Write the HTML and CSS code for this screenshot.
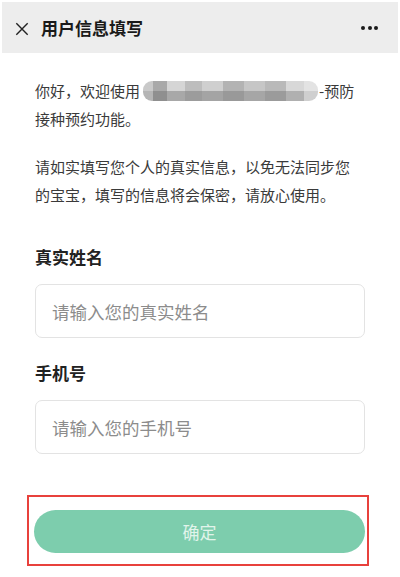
FILE: index.html
```html
<!DOCTYPE html>
<html lang="zh-CN">
<head>
<meta charset="utf-8">
<title>用户信息填写</title>
<link rel="stylesheet" href="styles.css">
</head>
<body>
<header class="nav">
  <svg class="nav-close" width="16" height="16" viewBox="0 0 16 16"><path d="M1.5 1.5 L14.5 14.5 M14.5 1.5 L1.5 14.5" stroke="#222" stroke-width="1.6" fill="none"/></svg>
  <h1 class="nav-title">用户信息填写</h1>
  <div class="nav-more"><span></span><span></span><span></span></div>
</header>
<main class="page">
  <p class="intro"><span>你好，欢迎使用</span><span class="blur" aria-hidden="true"></span><span>-预防</span><span>接种预约功能。</span></p>
  <p class="intro">请如实填写您个人的真实信息，以免无法同步您的宝宝，填写的信息将会保密，请放心使用。</p>
  <form class="form">
    <label class="field-label" for="name">真实姓名</label>
    <input class="field-input" id="name" type="text" placeholder="请输入您的真实姓名">
    <label class="field-label" for="phone">手机号</label>
    <input class="field-input" id="phone" type="tel" placeholder="请输入您的手机号">
    <div class="highlight">
      <button class="submit" type="button">确定</button>
    </div>
  </form>
</main>
</body>
</html>
```
FILE: styles.css
```css
* { box-sizing: border-box; }
html, body { margin: 0; padding: 0; background: #fff; }
body {
  font-family: "Noto Sans CJK SC", "Noto Sans", sans-serif;
  color: #333;
  width: 400px;
  height: 577px;
  overflow: hidden;
}
.nav {
  height: 51px;
  background: #ededed;
  display: flex;
  align-items: center;
  padding: 0 20px 0 13px;
  margin: 2px 2px 0 2px;
}
.nav-close { flex: none; margin-top: 2px; width: 14px; height: 14px; }
.nav-title {
  margin: 0 0 0 12px;
  font-size: 17px;
  font-weight: 700;
  color: #1a1a1a;
  flex: 1;
  line-height: 24px;
}
.nav-more { display: flex; gap: 2.5px; }
.nav-more span { width: 4px; height: 4px; border-radius: 50%; background: #1a1a1a; display: block; }
.page { padding: 0 35px; }
.intro {
  margin: 0;
  font-size: 15px;
  line-height: 28px;
  color: #3a3a3a;
  width: 322px;
}
.intro:first-child { margin-top: 24px; }
.intro + .intro { margin-top: 20px; }
.blur {
  display: inline-block;
  vertical-align: -4px;
  width: 175px;
  height: 20px;
  border-radius: 9px;
  margin: 0 1px 0 3px;
  background:
    linear-gradient(90deg, #c9c9c9 0 6%, #a9a9a9 6% 14%, #d5d5d5 14% 24%, #bdbdbd 24% 34%, #cfcfcf 34% 46%, #b3b3b3 46% 58%, #c6c6c6 58% 70%, #b9b9b9 70% 82%, #d8d8d8 82% 92%, #e3e3e3 92% 100%) top / 100% 50% no-repeat,
    linear-gradient(90deg, #b5b5b5 0 6%, #8f8f8f 6% 14%, #a8a8a8 14% 24%, #9c9c9c 24% 34%, #a4a4a4 34% 46%, #999 46% 58%, #a6a6a6 58% 70%, #9b9b9b 70% 82%, #b0b0b0 82% 92%, #cfcfcf 92% 100%) bottom / 100% 50% no-repeat;
}
.form { display: flex; flex-direction: column; margin-top: 36px; }
.field-label {
  font-size: 17px;
  font-weight: 700;
  line-height: 24px;
  color: #222;
}
.field-input {
  margin-top: 15px;
  height: 54px;
  width: 330px;
  border: 1px solid #e3e3e3;
  border-radius: 7px;
  padding: 0 16px;
  font-family: inherit;
  font-size: 17.5px;
  color: #333;
  outline: none;
  background: #fff;
}
.field-input::placeholder { color: #8c8c8c; }
.field-input + .field-label { margin-top: 23px; }
.highlight {
  margin: 41px 0 0 -8px;
  width: 342px;
  border: 2px solid #e8413c;
  padding: 13px 2px 11px 5px;
}
.submit {
  display: block;
  width: 331px;
  height: 43px;
  border: none;
  border-radius: 22px;
  background: #7dcdad;
  color: #e1f4eb;
  font-family: inherit;
  font-size: 17px;
  padding: 0;
}
```
